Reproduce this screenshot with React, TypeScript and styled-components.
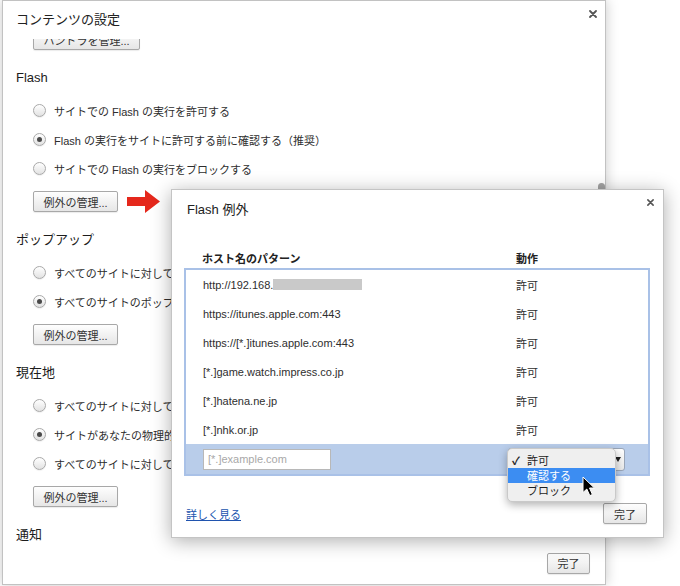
import { FC } from "react";
import styled, { createGlobalStyle } from "styled-components";

type RadioOption = {
  label: string;
  checked?: boolean;
};

type SettingsSection = {
  title: string;
  options: RadioOption[];
};

type ExceptionRow = {
  pattern: string;
  redacted?: boolean;
  action: string;
};

const sections: SettingsSection[] = [
  {
    title: "Flash",
    options: [
      { label: "サイトでの Flash の実行を許可する" },
      { label: "Flash の実行をサイトに許可する前に確認する（推奨）", checked: true },
      { label: "サイトでの Flash の実行をブロックする" },
    ],
  },
  {
    title: "ポップアップ",
    options: [
      { label: "すべてのサイトに対してポップアップの表示を許可する" },
      { label: "すべてのサイトのポップアップ表示を許可しない（推奨）", checked: true },
    ],
  },
  {
    title: "現在地",
    options: [
      { label: "すべてのサイトに対して物理的な現在地の追跡を許可する" },
      { label: "サイトがあなたの物理的な現在地を追跡しようとしたときに確認する（推奨）", checked: true },
      { label: "すべてのサイトに対して物理的な現在地の追跡を許可しない" },
    ],
  },
];

const exceptions: ExceptionRow[] = [
  { pattern: "http://192.168.", redacted: true, action: "許可" },
  { pattern: "https://itunes.apple.com:443", action: "許可" },
  { pattern: "https://[*.]itunes.apple.com:443", action: "許可" },
  { pattern: "[*.]game.watch.impress.co.jp", action: "許可" },
  { pattern: "[*.]hatena.ne.jp", action: "許可" },
  { pattern: "[*.]nhk.or.jp", action: "許可" },
];

const menuItems = [
  { label: "許可", checked: true },
  { label: "確認する", active: true },
  { label: "ブロック" },
];

const CloseIcon: FC<{ size: number }> = ({ size }) => (
  <svg width={size} height={size} viewBox="0 0 8 8">
    <path d="M1 1 L7 7 M7 1 L1 7" stroke="#555" strokeWidth="1.8" strokeLinecap="round" />
  </svg>
);

const App: FC = () => {
  return (
    <>
      <GlobalStyle />
      <StyledPage>
        <StyledSettingsDialog>
          <StyledDialogHeader>
            <StyledSettingsTitle>コンテンツの設定</StyledSettingsTitle>
            <StyledCloseButton $top={9} $right={8}>
              <CloseIcon size={8} />
            </StyledCloseButton>
          </StyledDialogHeader>

          <StyledSettingsBody>
            <StyledScrollContent>
              <StyledGrayButton $width={107}>ハンドラを管理...</StyledGrayButton>
              {sections.map((section) => (
                <StyledSection key={section.title}>
                  <StyledSectionTitle>{section.title}</StyledSectionTitle>
                  <StyledRadioList>
                    {section.options.map((option) => (
                      <StyledRadioRow key={option.label}>
                        <StyledRadio $checked={!!option.checked} />
                        <span>{option.label}</span>
                      </StyledRadioRow>
                    ))}
                  </StyledRadioList>
                  <StyledGrayButton $width={85}>例外の管理...</StyledGrayButton>
                </StyledSection>
              ))}
              <StyledSection>
                <StyledSectionTitle>通知</StyledSectionTitle>
              </StyledSection>
            </StyledScrollContent>
          </StyledSettingsBody>

          <StyledDialogFooter>
            <StyledGrayButton $width={43}>完了</StyledGrayButton>
          </StyledDialogFooter>

          <StyledScrollThumb />
        </StyledSettingsDialog>

        <StyledRedArrow width="34" height="23" viewBox="0 0 34 23">
          <polygon points="0,7 18,7 18,0 33,11.5 18,23 18,16 0,16" fill="#e5281c" />
        </StyledRedArrow>

        <StyledExceptionsDialog>
          <StyledExceptionsHeader>
            <StyledExceptionsTitle>Flash 例外</StyledExceptionsTitle>
            <StyledCloseButton $top={9} $right={-4}>
              <CloseIcon size={7} />
            </StyledCloseButton>
          </StyledExceptionsHeader>

          <StyledColumnHeader>
            <span>ホスト名のパターン</span>
            <span>動作</span>
          </StyledColumnHeader>

          <StyledExceptionList>
            {exceptions.map((row) => (
              <StyledExceptionRow key={row.pattern}>
                <span>
                  {row.pattern}
                  {row.redacted && <StyledRedaction />}
                </span>
                <span>{row.action}</span>
              </StyledExceptionRow>
            ))}
            <StyledEditRow>
              <StyledPatternInput placeholder="[*.]example.com" />
              <StyledSelectWrapper>
                <StyledSelect>
                  <StyledSelectArrow />
                </StyledSelect>
                <StyledMenu>
                  {menuItems.map((item) => (
                    <StyledMenuItem key={item.label} $active={!!item.active}>
                      <StyledCheck>{item.checked ? "✓" : ""}</StyledCheck>
                      {item.label}
                    </StyledMenuItem>
                  ))}
                  <StyledCursor width="14" height="21" viewBox="0 0 14 21">
                    <path
                      d="M1 1 L1 16.5 L4.8 13 L7.8 19.6 L10.4 18.5 L7.5 12 L12.4 12 Z"
                      fill="#000"
                      stroke="#fff"
                      strokeWidth="1"
                      strokeLinejoin="round"
                    />
                  </StyledCursor>
                </StyledMenu>
              </StyledSelectWrapper>
            </StyledEditRow>
          </StyledExceptionList>

          <StyledExceptionsFooter>
            <StyledLink href="#">詳しく見る</StyledLink>
            <StyledGrayButton $width={44}>完了</StyledGrayButton>
          </StyledExceptionsFooter>
        </StyledExceptionsDialog>
      </StyledPage>
    </>
  );
};

export default App;

const GlobalStyle = createGlobalStyle`
  * {
    box-sizing: border-box;
  }
  body {
    margin: 0;
    background: #ffffff;
    font-family: "Liberation Sans", "Noto Sans CJK JP", sans-serif;
    color: #303030;
  }
`;

const StyledPage = styled.div`
  position: relative;
  width: 680px;
  height: 586px;
  padding-left: 2px;
  overflow: hidden;
  background: #ffffff;
`;

const StyledSettingsDialog = styled.div`
  position: relative;
  display: flex;
  flex-direction: column;
  width: 604px;
  height: 585px;
  border: 1px solid #c2c2c2;
  background: #ffffff;
  box-shadow: 0 0 12px rgba(0, 0, 0, 0.22);
`;

const StyledDialogHeader = styled.div`
  display: flex;
  height: 38px;
  padding-left: 13px;
`;

const StyledSettingsTitle = styled.div`
  flex: 1;
  padding-top: 10px;
  font-size: 13px;
  line-height: 18px;
  color: #222;
`;

const StyledCloseButton = styled.div<{ $top: number; $right: number }>`
  display: flex;
  margin-top: ${({ $top }) => $top}px;
  margin-right: ${({ $right }) => $right}px;
  height: 10px;
  align-self: flex-start;
`;

const StyledSettingsBody = styled.div`
  flex: 1;
  overflow: hidden;
  padding-left: 13px;
`;

const StyledScrollContent = styled.div`
  display: flex;
  flex-direction: column;
  align-items: flex-start;
  margin-top: -10px;
  padding-left: 17px;
`;

const StyledSection = styled.div`
  display: flex;
  flex-direction: column;
  align-items: flex-start;
  margin-top: 18px;
  margin-left: -17px;
  padding-left: 17px;
`;

const StyledSectionTitle = styled.div`
  margin-left: -17px;
  height: 20px;
  font-size: 13px;
  line-height: 20px;
  color: #1c1c1c;
`;

const StyledRadioList = styled.div`
  display: flex;
  flex-direction: column;
  padding: 8px 0;
`;

const StyledRadioRow = styled.div`
  display: flex;
  align-items: center;
  gap: 8px;
  height: 29px;
  font-size: 11px;
  white-space: nowrap;
  color: #2e2e2e;
`;

const StyledRadio = styled.span<{ $checked: boolean }>`
  display: flex;
  align-items: center;
  justify-content: center;
  flex-shrink: 0;
  width: 13px;
  height: 13px;
  border-radius: 50%;
  border: 1px solid #a9a9a9;
  background: linear-gradient(#ffffff, #e2e2e2);
  box-shadow: 0 1px 1px rgba(0, 0, 0, 0.06);

  &::after {
    content: "";
    display: ${({ $checked }) => ($checked ? "block" : "none")};
    width: 5px;
    height: 5px;
    border-radius: 50%;
    background: #4a4a4a;
  }
`;

const StyledGrayButton = styled.button<{ $width: number }>`
  width: ${({ $width }) => $width}px;
  height: 21px;
  padding: 0;
  border: 1px solid #a8a8a8;
  border-radius: 2px;
  background: linear-gradient(#fefefe, #e6e6e6);
  box-shadow: 0 1px 1px rgba(0, 0, 0, 0.08);
  font-family: "Liberation Sans", "Noto Sans CJK JP", sans-serif;
  font-size: 11px;
  color: #333;
  white-space: nowrap;
`;

const StyledDialogFooter = styled.div`
  display: flex;
  align-items: center;
  justify-content: flex-end;
  height: 42px;
  padding-right: 15px;
`;

const StyledScrollThumb = styled.div`
  position: absolute;
  left: 595px;
  top: 182px;
  width: 7px;
  height: 40px;
  border-radius: 4px;
  background: #a3a3a3;
`;

const StyledRedArrow = styled.svg`
  position: absolute;
  left: 127px;
  top: 190px;
`;

const StyledExceptionsDialog = styled.div`
  position: absolute;
  left: 171px;
  top: 189px;
  display: flex;
  flex-direction: column;
  width: 493px;
  height: 349px;
  padding: 0 13px 13px 12px;
  border: 1px solid #c4c4c4;
  background: #ffffff;
  box-shadow: 0 3px 18px rgba(0, 0, 0, 0.32);
`;

const StyledExceptionsHeader = styled.div`
  display: flex;
  height: 40px;
`;

const StyledExceptionsTitle = styled.div`
  flex: 1;
  padding-left: 3px;
  font-size: 13px;
  line-height: 40px;
  color: #222;
`;

const StyledColumnHeader = styled.div`
  display: grid;
  grid-template-columns: 314px 1fr;
  align-items: center;
  height: 20px;
  margin-top: 18px;
  padding-left: 18px;
  font-size: 11px;
  font-weight: bold;
  color: #222;
`;

const StyledExceptionList = styled.div`
  display: flex;
  flex-direction: column;
  border: 2px solid #a9c1e7;
`;

const StyledExceptionRow = styled.div`
  display: grid;
  grid-template-columns: 313px 1fr;
  align-items: center;
  height: 29px;
  padding-left: 17px;
  font-size: 11px;
  color: #2e2e2e;

  & > span {
    display: flex;
    align-items: center;
  }
`;

const StyledRedaction = styled.span`
  display: inline-block;
  width: 89px;
  height: 11px;
  background: #c9c9c9;
`;

const StyledEditRow = styled.div`
  display: grid;
  grid-template-columns: 305px 1fr;
  align-items: center;
  height: 30px;
  padding-left: 17px;
  background: #b9cdea;
`;

const StyledPatternInput = styled.input`
  width: 128px;
  height: 21px;
  padding: 0 4px;
  border: 1px solid #b8b8b8;
  border-radius: 0;
  background: #ffffff;
  font-family: "Liberation Sans", "Noto Sans CJK JP", sans-serif;
  font-size: 11px;
  outline: none;

  &::placeholder {
    color: #a8a8a8;
  }
`;

const StyledSelectWrapper = styled.div`
  position: relative;
  width: 117px;
  height: 23px;
`;

const StyledSelect = styled.div`
  display: flex;
  align-items: center;
  justify-content: flex-end;
  width: 117px;
  height: 23px;
  padding-right: 3px;
  border: 1px solid #9aa6b8;
  border-radius: 3px;
  background: linear-gradient(#ffffff, #e9e9e9);
`;

const StyledSelectArrow = styled.span`
  width: 0;
  height: 0;
  border-left: 3px solid transparent;
  border-right: 3px solid transparent;
  border-top: 5px solid #222;
`;

const StyledMenu = styled.div`
  position: absolute;
  left: -1px;
  top: 0;
  width: 109px;
  height: 54px;
  padding: 4px 0 5px;
  border: 1px solid #c9c9c9;
  border-radius: 5px;
  background: #efefef;
  box-shadow: 0 3px 9px rgba(0, 0, 0, 0.3);
`;

const StyledMenuItem = styled.div<{ $active: boolean }>`
  display: flex;
  align-items: center;
  height: 15px;
  padding-left: 4px;
  font-size: 11px;
  color: ${({ $active }) => ($active ? "#ffffff" : "#1e1e1e")};
  background: ${({ $active }) => ($active ? "#3c8df2" : "transparent")};
`;

const StyledCheck = styled.span`
  width: 15px;
  font-size: 11px;
  font-weight: bold;
`;

const StyledCursor = styled.svg`
  position: absolute;
  left: 74px;
  top: 27px;
`;

const StyledExceptionsFooter = styled.div`
  display: flex;
  align-items: center;
  justify-content: space-between;
  height: 21px;
  margin-top: 27px;
  padding: 0 3px 0 2px;
`;

const StyledLink = styled.a`
  font-size: 11px;
  color: #2053ae;
  text-decoration: underline;
`;
